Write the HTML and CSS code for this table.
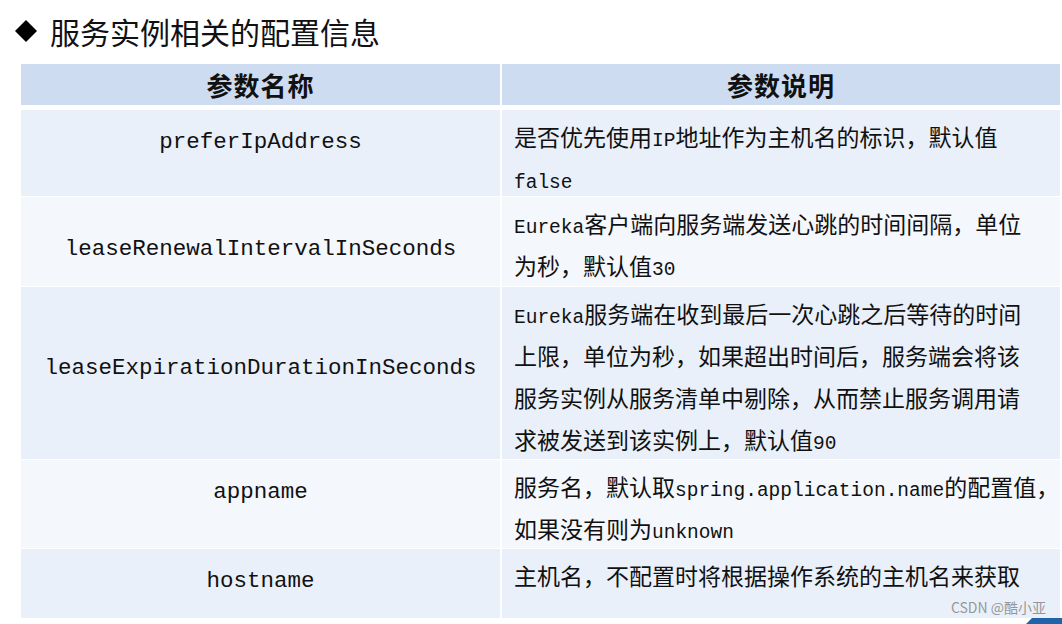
FILE: index.html
```html
<!DOCTYPE html>
<html lang="zh-CN">
<head>
<meta charset="utf-8">
<title>服务实例相关的配置信息</title>
<link rel="stylesheet" href="styles.css">
</head>
<body>
<div class="page">
  <h1 class="title">
    <svg class="diamond" width="22" height="22" viewBox="0 0 22 22"><polygon points="11,0 22,11 11,22 0,11" fill="#000"/></svg>
    <span>服务实例相关的配置信息</span>
  </h1>

  <div class="table">
    <div class="head">
      <div class="hcell">参数名称</div>
      <div class="hcell">参数说明</div>
    </div>
    <div class="body">
      <div class="name odd off-a">preferIpAddress</div>
      <div class="desc odd">是否优先使用<span class="lat">IP</span>地址作为主机名的标识，默认值<br><span class="lat">false</span></div>

      <div class="name even off-b">leaseRenewalIntervalInSeconds</div>
      <div class="desc even"><span class="lat">Eureka</span>客户端向服务端发送心跳的时间间隔，单位<br>为秒，默认值<span class="lat">30</span></div>

      <div class="name odd off-c">leaseExpirationDurationInSeconds</div>
      <div class="desc odd"><span class="lat">Eureka</span>服务端在收到最后一次心跳之后等待的时间<br>上限，单位为秒，如果超出时间后，服务端会将该<br>服务实例从服务清单中剔除，从而禁止服务调用请<br>求被发送到该实例上，默认值<span class="lat">90</span></div>

      <div class="name even off-a">appname</div>
      <div class="desc even">服务名，默认取<span class="lat">spring.application.name</span>的配置值，<br>如果没有则为<span class="lat">unknown</span></div>

      <div class="name odd off-a">hostname</div>
      <div class="desc odd">主机名，不配置时将根据操作系统的主机名来获取</div>
    </div>
  </div>

  <div class="watermark">CSDN @酷小亚</div>
  <div class="corner"></div>
</div>
</body>
</html>
```

FILE: styles.css
```css
html, body {
  margin: 0;
  padding: 0;
  background: #fff;
}

.page {
  position: relative;
  width: 1062px;
  height: 624px;
  overflow: hidden;
  color: #111;
}

.title {
  display: flex;
  align-items: center;
  gap: 13px;
  margin: 0;
  padding: 11px 0 0 15px;
  height: 40px;
  font-family: "Noto Sans CJK SC", sans-serif;
  font-weight: 400;
  font-size: 30px;
  line-height: 40px;
  color: #111;
}

.diamond {
  flex: none;
}

.table {
  margin: 13px 0 0 21px;
  width: 1039px;
  display: flex;
  flex-direction: column;
  gap: 5px;
}

.head {
  display: grid;
  grid-template-columns: 479px 558px;
  column-gap: 2px;
  height: 41px;
}

.hcell {
  background: #cedcf1;
  display: flex;
  align-items: center;
  justify-content: center;
  font-family: "Noto Sans CJK SC", sans-serif;
  font-weight: 700;
  font-size: 26px;
  letter-spacing: 1px;
  color: #111;
}

.body {
  display: grid;
  grid-template-columns: 479px 558px;
  grid-template-rows: 86px 89px 172px 88px 69px;
  column-gap: 2px;
  row-gap: 1px;
}

.odd { background: #e9f0f9; }
.even { background: #f4f7fc; }

.name {
  text-align: center;
  font-family: "Liberation Mono", monospace;
  font-size: 22.5px;
  line-height: 41px;
  color: #111;
  box-sizing: border-box;
}

.off-a { padding-top: 12px; }
.off-b { padding-top: 32px; }
.off-c { padding-top: 61px; }

.desc {
  box-sizing: border-box;
  padding: 5px 0 0 12px;
  font-family: "Noto Sans CJK SC", sans-serif;
  font-size: 23px;
  line-height: 42px;
  white-space: nowrap;
  color: #111;
}

.lat {
  font-family: "Liberation Mono", monospace;
  font-size: 19.5px;
  line-height: 1;
}

.watermark {
  position: absolute;
  right: 16px;
  bottom: 8px;
  font-family: "Noto Sans CJK SC", sans-serif;
  font-size: 14px;
  line-height: 18px;
  color: rgba(120, 120, 120, 0.75);
}

.corner {
  position: absolute;
  right: 0;
  bottom: 0;
  width: 36px;
  height: 6px;
  background: #1f63a9;
  clip-path: polygon(6px 0, 100% 0, 100% 100%, 0 100%);
}
```
